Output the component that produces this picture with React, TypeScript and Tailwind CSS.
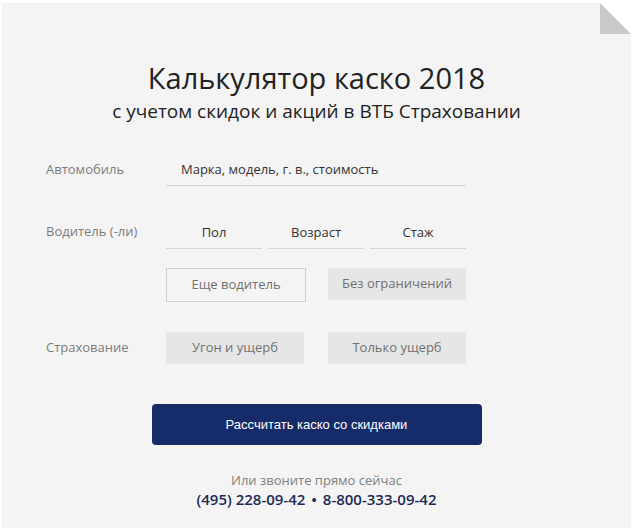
import React from "react";

const sans = { fontFamily: '"Open Sans", "Noto Sans", sans-serif' };

function Field({ label, children }: { label: string; children: React.ReactNode }) {
  return (
    <div className="flex items-start">
      <div className="w-[120px] shrink-0 text-[13px] leading-[23px] text-[#7d7d7d]">{label}</div>
      <div className="flex-1">{children}</div>
    </div>
  );
}

export default function App() {
  return (
    <div className="h-[528px] w-[634px] bg-white pt-[3px] pl-[2px]" style={sans}>
      <div className="relative h-[525px] w-[629px] bg-[#f4f4f4]">
        {/* folded page corner */}
        <svg className="absolute right-0 top-0" width="31" height="31" viewBox="0 0 31 31">
          <polygon points="0,0 31,31 31,0" fill="#ffffff" />
          <polygon points="0,0 0,31 31,31" fill="#c9c9c9" />
        </svg>

        <div className="flex flex-col items-center pt-[57px]">
          <h1 className="text-[29px] leading-[36px] text-[#222]">Калькулятор каско 2018</h1>
          <p className="mt-[2px] text-[19px] leading-[26px] text-[#222]">
            с учетом скидок и акций в ВТБ Страховании
          </p>
        </div>

        <div className="ml-[44px] mt-[34px] w-[420px]">
          <Field label="Автомобиль">
            <div className="h-[28px] border-b border-[#d6d6d6] pl-[15px] text-[13px] leading-[23px] text-[#333]">
              Марка, модель, г. в., стоимость
            </div>
          </Field>

          <div className="mt-[34px]">
            <Field label="Водитель (-ли)">
              <div className="grid grid-cols-3 gap-[6px]">
                {["Пол", "Возраст", "Стаж"].map((t) => (
                  <div
                    key={t}
                    className="h-[29px] border-b border-[#d6d6d6] text-center text-[13px] leading-[24px] text-[#333]"
                  >
                    {t}
                  </div>
                ))}
              </div>
            </Field>
          </div>

          <div className="ml-[120px] mt-[19px] flex items-start gap-[22px]">
            <div className="flex h-[34px] w-[140px] items-center justify-center border border-[#cfcfcf] text-[13px] text-[#707070]">
              Еще водитель
            </div>
            <div className="flex h-[32px] w-[138px] items-center justify-center bg-[#e6e6e6] text-[13px] text-[#707070]">
              Без ограничений
            </div>
          </div>

          <div className="mt-[30px] flex items-center">
            <div className="w-[120px] shrink-0 text-[13px] text-[#7d7d7d]">Страхование</div>
            <div className="flex gap-[24px]">
              <div className="flex h-[32px] w-[138px] items-center justify-center bg-[#e6e6e6] text-[13px] text-[#707070]">
                Угон и ущерб
              </div>
              <div className="flex h-[32px] w-[138px] items-center justify-center bg-[#e6e6e6] text-[13px] text-[#707070]">
                Только ущерб
              </div>
            </div>
          </div>
        </div>

        <div className="flex flex-col items-center">
          <button
            className="mt-[40px] h-[41px] w-[330px] rounded-[4px] bg-[#162b69] text-[13px] text-white"
            style={{ fontFamily: '"Liberation Sans", Arial, sans-serif' }}
          >
            Рассчитать каско со скидками
          </button>
          <div className="mt-[26px] text-[13px] leading-[18px] text-[#808080]">Или звоните прямо сейчас</div>
          <div className="text-[15px] font-semibold leading-[20px] text-[#1d2a55]">
            (495) 228-09-42 <span className="mx-[2px]">•</span> 8-800-333-09-42
          </div>
        </div>
      </div>
    </div>
  );
}
